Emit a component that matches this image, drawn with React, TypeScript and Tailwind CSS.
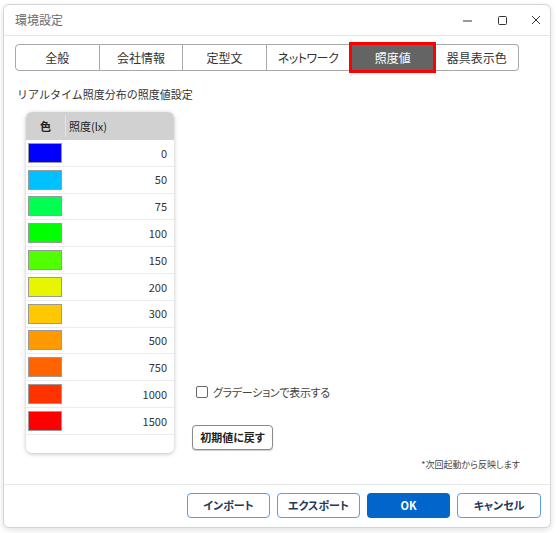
import React from "react";

const rows = [
  { color: "#0000ff", value: "0" },
  { color: "#00c0ff", value: "50" },
  { color: "#00ff50", value: "75" },
  { color: "#00ff00", value: "100" },
  { color: "#50ff00", value: "150" },
  { color: "#e8f500", value: "200" },
  { color: "#ffc800", value: "300" },
  { color: "#ff9900", value: "500" },
  { color: "#ff6400", value: "750" },
  { color: "#ff3200", value: "1000" },
  { color: "#ff0000", value: "1500" },
];

const tabs = ["全般", "会社情報", "定型文", "ネットワーク", "照度値", "器具表示色"];

export default function App() {
  return (
    <div
      className="w-[556px] h-[533px] bg-white pt-[4px] pl-[3px] overflow-hidden"
      style={{ fontFamily: '"Noto Sans CJK JP", "Noto Sans", sans-serif' }}
    >
      <div className="w-[548px] h-[524px] bg-white border border-[#d4d4d4] rounded-[6px] shadow-[0_2px_6px_rgba(0,0,0,0.12)] flex flex-col">
        {/* title bar */}
        <div className="h-[31px] border-b border-[#e6e6e6] flex items-center pl-[11px] pr-[9px]">
          <span className="text-[12px] text-[#6b6b6b]">環境設定</span>
          <div className="ml-auto flex items-center gap-[24px] text-[#333]">
            <svg width="9" height="9" viewBox="0 0 9 9" className="mr-[2px]">
              <line x1="0" y1="5" x2="9" y2="5" stroke="#333" strokeWidth="1" />
            </svg>
            <svg width="9" height="9" viewBox="0 0 9 9">
              <rect x="0.5" y="0.5" width="8" height="8" rx="1" fill="none" stroke="#333" strokeWidth="1" />
            </svg>
            <svg width="10" height="10" viewBox="0 0 10 10">
              <path d="M1 1L9 9M9 1L1 9" stroke="#333" strokeWidth="1" />
            </svg>
          </div>
        </div>

        {/* tabs */}
        <div className="mt-[8px] ml-[11px] flex w-[504px] h-[27px] [font-feature-settings:'palt']">
          {tabs.map((t, i) =>
            t === "照度値" ? (
              <div
                key={t}
                className="w-[87px] h-[31px] -mt-[2px] -mx-[1px] z-10 bg-[#646464] border-[3px] border-[#ff0000] flex items-center justify-center text-[12px] text-white"
              >
                {t}
              </div>
            ) : (
              <div
                key={t}
                className={`flex-1 border border-[#a8a8a8] flex items-center justify-center text-[12px] text-[#333] bg-white ${
                  i === 0 ? "rounded-l-[4px]" : "border-l-0"
                } ${i === tabs.length - 1 ? "rounded-r-[4px]" : ""} ${t === "ネットワーク" ? "text-[11px] tracking-[-0.5px]" : ""}`}
              >
                {t}
              </div>
            )
          )}
        </div>

        <div className="mt-[16px] ml-[13px] text-[11px] text-[#333] leading-[14px]">
          リアルタイム照度分布の照度値設定
        </div>

        <div className="flex mt-[11px] ml-[22px]">
          {/* table */}
          <div className="w-[148px] h-[341px] rounded-[6px] bg-white shadow-[0_1px_4px_rgba(0,0,0,0.25)] overflow-hidden">
            <div className="h-[28px] bg-[#d1d1d1] flex items-center text-[11px] text-[#222]">
              <div className="w-[39px] text-center font-bold">色</div>
              <div className="w-px h-[22px] bg-[#e4e4e4]" />
              <div className="pl-[3px]">照度(lx)</div>
            </div>
            {rows.map((r) => (
              <div key={r.value} className="h-[26.8px] border-b border-[#ececec] flex items-center pl-[2px] pr-[7px]">
                <div className="w-[34px] h-[20px] border border-[#9a9a9a]" style={{ backgroundColor: r.color }} />
                <div className="ml-auto text-[11px] text-[#333]">{r.value}</div>
              </div>
            ))}
          </div>

          {/* right side */}
          <div className="flex flex-col ml-[18px] flex-1 pr-[30px] [font-feature-settings:'palt']">
            <div className="mt-[272px] ml-[4px] flex items-center gap-[5px]">
              <div className="w-[12px] h-[12px] border border-[#666] rounded-[2px] bg-white" />
              <span className="text-[11px] text-[#444] tracking-[-0.3px]">グラデーションで表示する</span>
            </div>
            <button className="mt-[24px] w-[81px] h-[25px] border border-[#8a8a8a] rounded-[4px] bg-white shadow-[0_1px_1px_rgba(0,0,0,0.2)] text-[11px] font-bold text-[#222]">
              初期値に戻す
            </button>
            <div className="mt-[8px] self-end text-[9px] text-[#444]">*次回起動から反映します</div>
          </div>
        </div>

        {/* footer */}
        <div className="mt-auto border-t border-[#e8e8e8] h-[43px] flex items-center justify-end gap-[7px] pr-[9px] pb-[2px] [font-feature-settings:'palt']">
          {["インポート", "エクスポート"].map((b) => (
            <button
              key={b}
              className="w-[83px] h-[25px] border border-[#5b9de6] rounded-[4px] bg-white text-[11px] font-bold text-[#1f3a5a]"
            >
              {b}
            </button>
          ))}
          <button className="w-[83px] h-[25px] rounded-[4px] bg-[#0066cc] text-[11px] font-bold text-white">
            OK
          </button>
          <button className="w-[84px] h-[25px] border border-[#5b9de6] rounded-[4px] bg-white text-[11px] font-bold text-[#1f3a5a]">
            キャンセル
          </button>
        </div>
      </div>
    </div>
  );
}
